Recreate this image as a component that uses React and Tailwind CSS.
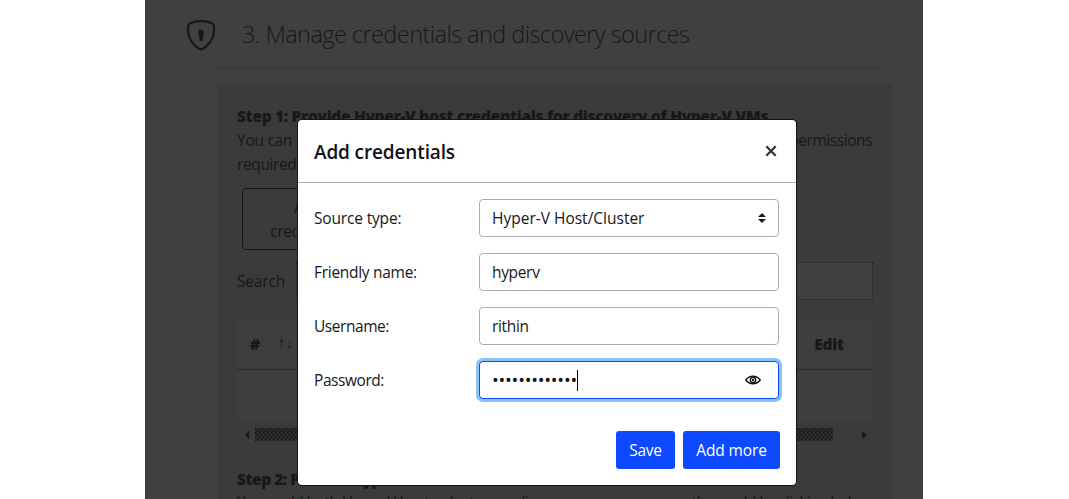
import React from 'react';

const label = 'w-[165px] shrink-0 whitespace-nowrap';
const field = 'relative flex h-[38px] w-[300px] items-center rounded border border-[#a9adb8] bg-white px-3';

function Fit({ w, children, className = '' }) {
  const ref = React.useRef(null);
  const [ls, setLs] = React.useState(0);
  React.useLayoutEffect(() => {
    const el = ref.current;
    setLs((w - el.offsetWidth) / el.textContent.length);
  }, []);
  return (
    <span ref={ref} className={'inline-block whitespace-nowrap ' + className} style={{ letterSpacing: ls + 'px' }}>
      {children}
    </span>
  );
}

function Shield() {
  return (
    <svg width="30" height="32" viewBox="0 0 30 32" fill="none">
      <path d="M15 2.200C11 2.200 6.500 3 3.500 4.400C2.300 5 2 6 2 8V13C2.500 20 8 27 13 29.700C14.500 30.500 15.500 30.500 17 29.700C22 27 27.500 20 28 13V8C28 6 27.700 5 26.500 4.400C23.500 3 19 2.200 15 2.200Z" stroke="#17171b" strokeWidth="2.200" />
      <path d="M12 13.500a3 3 0 1 1 6 0c0 1.500-.3 2.400-1 3l-.3 5.500h-3.200l-.3-5.500c-.7-.6-1.200-1.500-1.200-3Z" fill="#17171b" />
    </svg>
  );
}

function Eye() {
  return (
    <svg width="16" height="10" viewBox="0 0 16 10" fill="none" stroke="#111216" strokeWidth="1.4">
      <path d="M.8 5C4.500-.2 11.500-.2 15.200 5C11.500 10 4.500 10 .8 5Z" />
      <circle cx="8" cy="5" r="2.700" />
      <circle cx="8" cy="5" r=".5" />
    </svg>
  );
}

export default function App() {
  return (
    <div className="relative h-[499px] w-[1069px] overflow-hidden bg-white font-['Open_Sans','Noto_Sans',sans-serif] text-[15.5px] leading-6 text-[#17171b]">
      <main className="ml-[145px] h-full w-[778px] overflow-hidden bg-[#404040]">
        <header className="flex h-[67px] items-start pl-[41px] pt-[19px]">
          <Shield />
          <h1 className="ml-[26px] text-[23.5px] font-light leading-[30px]"><Fit w={448}>3. Manage credentials and discovery sources</Fit></h1>
        </header>
        <div className="ml-[71px] h-[2px] w-[668px] bg-[#3b3b3c]" />
        <section className="ml-[73px] mt-[15px] h-[430px] w-[674px] bg-[#3b3b3b] pl-[19px] pt-5">
          <h2 className="font-extrabold"><Fit w={531}>Step 1: Provide Hyper-V host credentials for discovery of Hyper-V VMs</Fit></h2>
          <div className="flex w-[635px] justify-between"><Fit w={55}>You can</Fit><Fit w={83}>permissions</Fit></div>
          <p><Fit w={59}>required</Fit></p>
          <div className="ml-[5px] mt-3 flex h-[62px] w-[132px] flex-col items-center justify-center rounded border border-[#17171b]">
            <Fit w={28} className="h-6">Add</Fit>
            <Fit w={76} className="h-6">credentials</Fit>
          </div>
          <div className="mt-3 flex h-[38px] items-center">
            <Fit w={48}>Search</Fit>
            <div className="ml-[11px] h-[38px] w-[577px] border border-dotted border-[#202022] bg-[#404040]" />
          </div>
          <div className="mt-5 flex h-[50px] w-[635px] items-center border-b border-dotted border-[#17171b] bg-[#3e3e3e] pb-0.5 font-extrabold">
            <span className="ml-[13px]">#</span>
            <span className="ml-[17px] flex h-5 items-center pb-1 text-base font-normal"><span>↑</span><span className="opacity-60">↓</span></span>
            <span className="ml-auto mr-7"><Fit w={30}>Edit</Fit></span>
          </div>
          <div className="h-[51px] w-[635px] bg-[#3e3e3e]" />
          <div className="ml-[5px] mt-[7px] flex h-[14px] w-[626px] items-center">
            <svg width="13" height="14"><path d="M7 3v8L3 7Z" fill="#17171b" /></svg>
            <svg width="578" height="14">
              <defs><pattern id="grain" width="4" height="4" patternUnits="userSpaceOnUse"><path d="M0 0h1v1H0zM2 1h1v1H2zM1 2h1v1H1zM3 3h1v1H3zM2 3h1v1H2zM0 1h1v1H0z" fill="#151518" /></pattern></defs>
              <rect width="578" height="13" fill="#303033" /><rect width="578" height="13" fill="url(#grain)" />
            </svg>
            <svg className="ml-auto" width="9" height="14"><path d="M3 3v8l5-4Z" fill="#17171b" /></svg>
          </div>
          <h2 className="mt-[25px] font-extrabold"><Fit w={270}>Step 2: Provide Hyper-V host/cluster</Fit></h2>
          <p className="-mt-px"><Fit w={634}>You could both Hyper-V hosts, clusters or discover resources across the world by clicking below</Fit></p>
        </section>
      </main>

      <div role="dialog" className="absolute left-[298px] top-[120px] h-[365px] w-[498px] rounded bg-white shadow-[0_0_0_1px_#151518]">
        <div className="flex h-[63px] items-center justify-between border-b border-[#a9adb8] pl-4 pr-[19px] pt-0.5">
          <h2 className="text-[19px] font-semibold text-[#111216]"><Fit w={141}>Add credentials</Fit></h2>
          <svg width="12" height="12" viewBox="0 0 12 12" className="-mt-0.5"><path d="M1.300 1.300l9.400 9.400M10.700 1.300l-9.400 9.400" stroke="#333338" strokeWidth="2.300" /></svg>
        </div>
        <div className="flex flex-col gap-4 pl-4 pt-4">
          <div className="flex items-center">
            <span className={label}><Fit w={87}>Source type:</Fit></span>
            <div className={field + ' justify-between'}>
              <Fit w={152}>Hyper-V Host/Cluster</Fit>
              <svg width="8" height="10" viewBox="0 0 8 10"><path d="M4 0l4 4H0ZM4 10L0 6h8Z" fill="#17171b" /></svg>
            </div>
          </div>
          <div className="flex items-center">
            <span className={label}><Fit w={103}>Friendly name:</Fit></span>
            <div className={field}><Fit w={48}>hyperv</Fit></div>
          </div>
          <div className="flex items-center">
            <span className={label}><Fit w={75}>Username:</Fit></span>
            <div className={field}><Fit w={37}>rithin</Fit></div>
          </div>
          <div className="flex items-center">
            <span className={label}><Fit w={70}>Password:</Fit></span>
            <div className="flex h-[38px] w-[300px] items-center rounded border border-[#0d4aff] bg-white px-3 shadow-[0_0_0_3px_#8ac3fc]">
              <Fit w={85} className="text-[18px]">•••••••••••••</Fit>
              <span className="h-[21px] w-px bg-black" />
              <span className="ml-auto mr-[5px]"><Eye /></span>
            </div>
          </div>
        </div>
        <div className="mt-8 flex justify-end gap-2 pr-4 text-white">
          <button className="h-[38px] w-[59px] rounded-[3px] bg-[#0d4aff]"><Fit w={33}>Save</Fit></button>
          <button className="h-[38px] w-[97px] rounded-[3px] bg-[#0d4aff]"><Fit w={71}>Add more</Fit></button>
        </div>
      </div>
    </div>
  );
}
